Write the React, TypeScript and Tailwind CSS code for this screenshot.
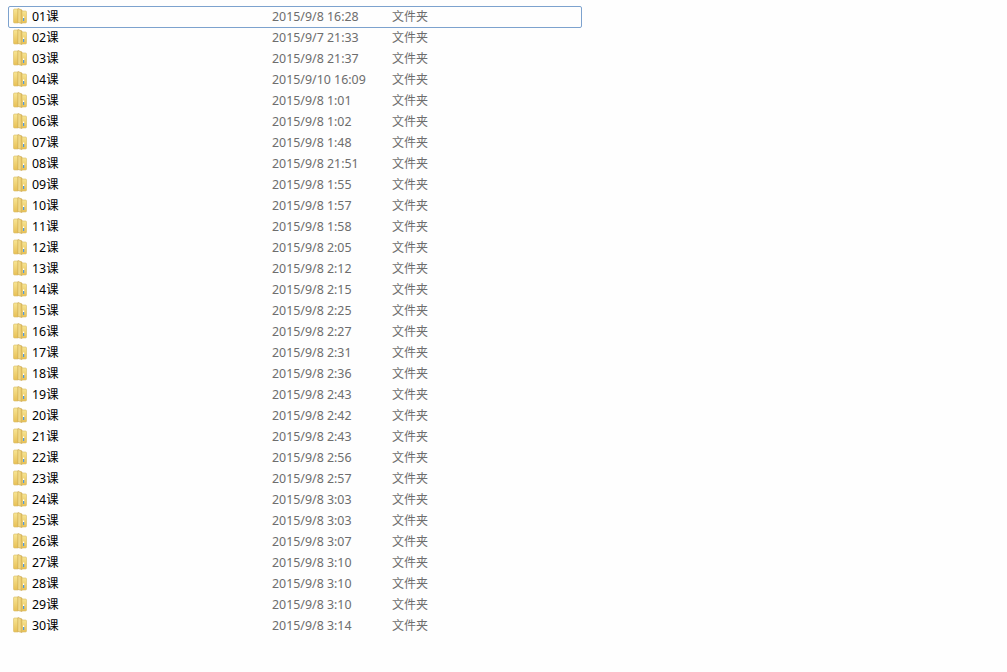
const folders = [
  ["01课", "2015/9/8 16:28"],
  ["02课", "2015/9/7 21:33"],
  ["03课", "2015/9/8 21:37"],
  ["04课", "2015/9/10 16:09"],
  ["05课", "2015/9/8 1:01"],
  ["06课", "2015/9/8 1:02"],
  ["07课", "2015/9/8 1:48"],
  ["08课", "2015/9/8 21:51"],
  ["09课", "2015/9/8 1:55"],
  ["10课", "2015/9/8 1:57"],
  ["11课", "2015/9/8 1:58"],
  ["12课", "2015/9/8 2:05"],
  ["13课", "2015/9/8 2:12"],
  ["14课", "2015/9/8 2:15"],
  ["15课", "2015/9/8 2:25"],
  ["16课", "2015/9/8 2:27"],
  ["17课", "2015/9/8 2:31"],
  ["18课", "2015/9/8 2:36"],
  ["19课", "2015/9/8 2:43"],
  ["20课", "2015/9/8 2:42"],
  ["21课", "2015/9/8 2:43"],
  ["22课", "2015/9/8 2:56"],
  ["23课", "2015/9/8 2:57"],
  ["24课", "2015/9/8 3:03"],
  ["25课", "2015/9/8 3:03"],
  ["26课", "2015/9/8 3:07"],
  ["27课", "2015/9/8 3:10"],
  ["28课", "2015/9/8 3:10"],
  ["29课", "2015/9/8 3:10"],
  ["30课", "2015/9/8 3:14"],
];

function FolderIcon() {
  return (
    <svg width="14" height="16" viewBox="0 0 14 16" className="mt-[1px] shrink-0">
      <defs>
        <linearGradient id="back" x1="0" y1="0" x2="0" y2="1">
          <stop offset="0" stopColor="#f7e594" />
          <stop offset="1" stopColor="#e8c055" />
        </linearGradient>
        <linearGradient id="door" x1="0" y1="0" x2="1" y2="0">
          <stop offset="0" stopColor="#f8e8a0" />
          <stop offset="1" stopColor="#e3bd58" />
        </linearGradient>
      </defs>
      <path d="M0.5 2 Q0.5 1 1.5 1 L5 1 L5 15 L1.5 15 Q0.5 15 0.5 14 Z" fill="url(#back)" stroke="#d8bc68" strokeWidth="0.6" />
      <path d="M5 0.5 L9 2 L9 15.5 L5 14.5 Z" fill="url(#door)" stroke="#c9a44a" strokeWidth="0.6" />
      <path d="M9 3 L12.5 3 Q13.5 3 13.5 4 L13.5 14 Q13.5 15 12.5 15 L9 15 Z" fill="url(#back)" stroke="#d8bc68" strokeWidth="0.6" />
      <rect x="10" y="10" width="1.2" height="3" fill="#4f9be0" />
      <rect x="10" y="8.5" width="1.2" height="1.5" fill="#ffffff" />
    </svg>
  );
}

export default function App() {
  return (
    <div className="h-[672px] w-[1007px] overflow-hidden bg-[#fefefe] pl-2 pt-[6px] font-['Noto_Sans','Noto_Sans_CJK_SC',sans-serif] text-[12px] leading-[18px]">
      <div className="w-[574px]">
        {folders.map(([name, date], i) => (
          <div
            key={name}
            className={
              i === 0
                ? "flex h-[22px] items-start rounded-[2px] border border-[#7da2ce] pl-[4px] mb-[-1px]"
                : "flex h-[21px] items-start border border-transparent pl-[4px]"
            }
          >
            <FolderIcon />
            <span className="ml-[5px] mt-[1px] w-[240px] text-[12.4px] leading-[18px] text-black">{name}</span>
            <span className="mt-[1px] w-[120px] text-[12.4px] leading-[18px] text-[#6d6d6d]">{date}</span>
            <span className="mt-[1px] text-[#6d6d6d]">文件夹</span>
          </div>
        ))}
      </div>
    </div>
  );
}
